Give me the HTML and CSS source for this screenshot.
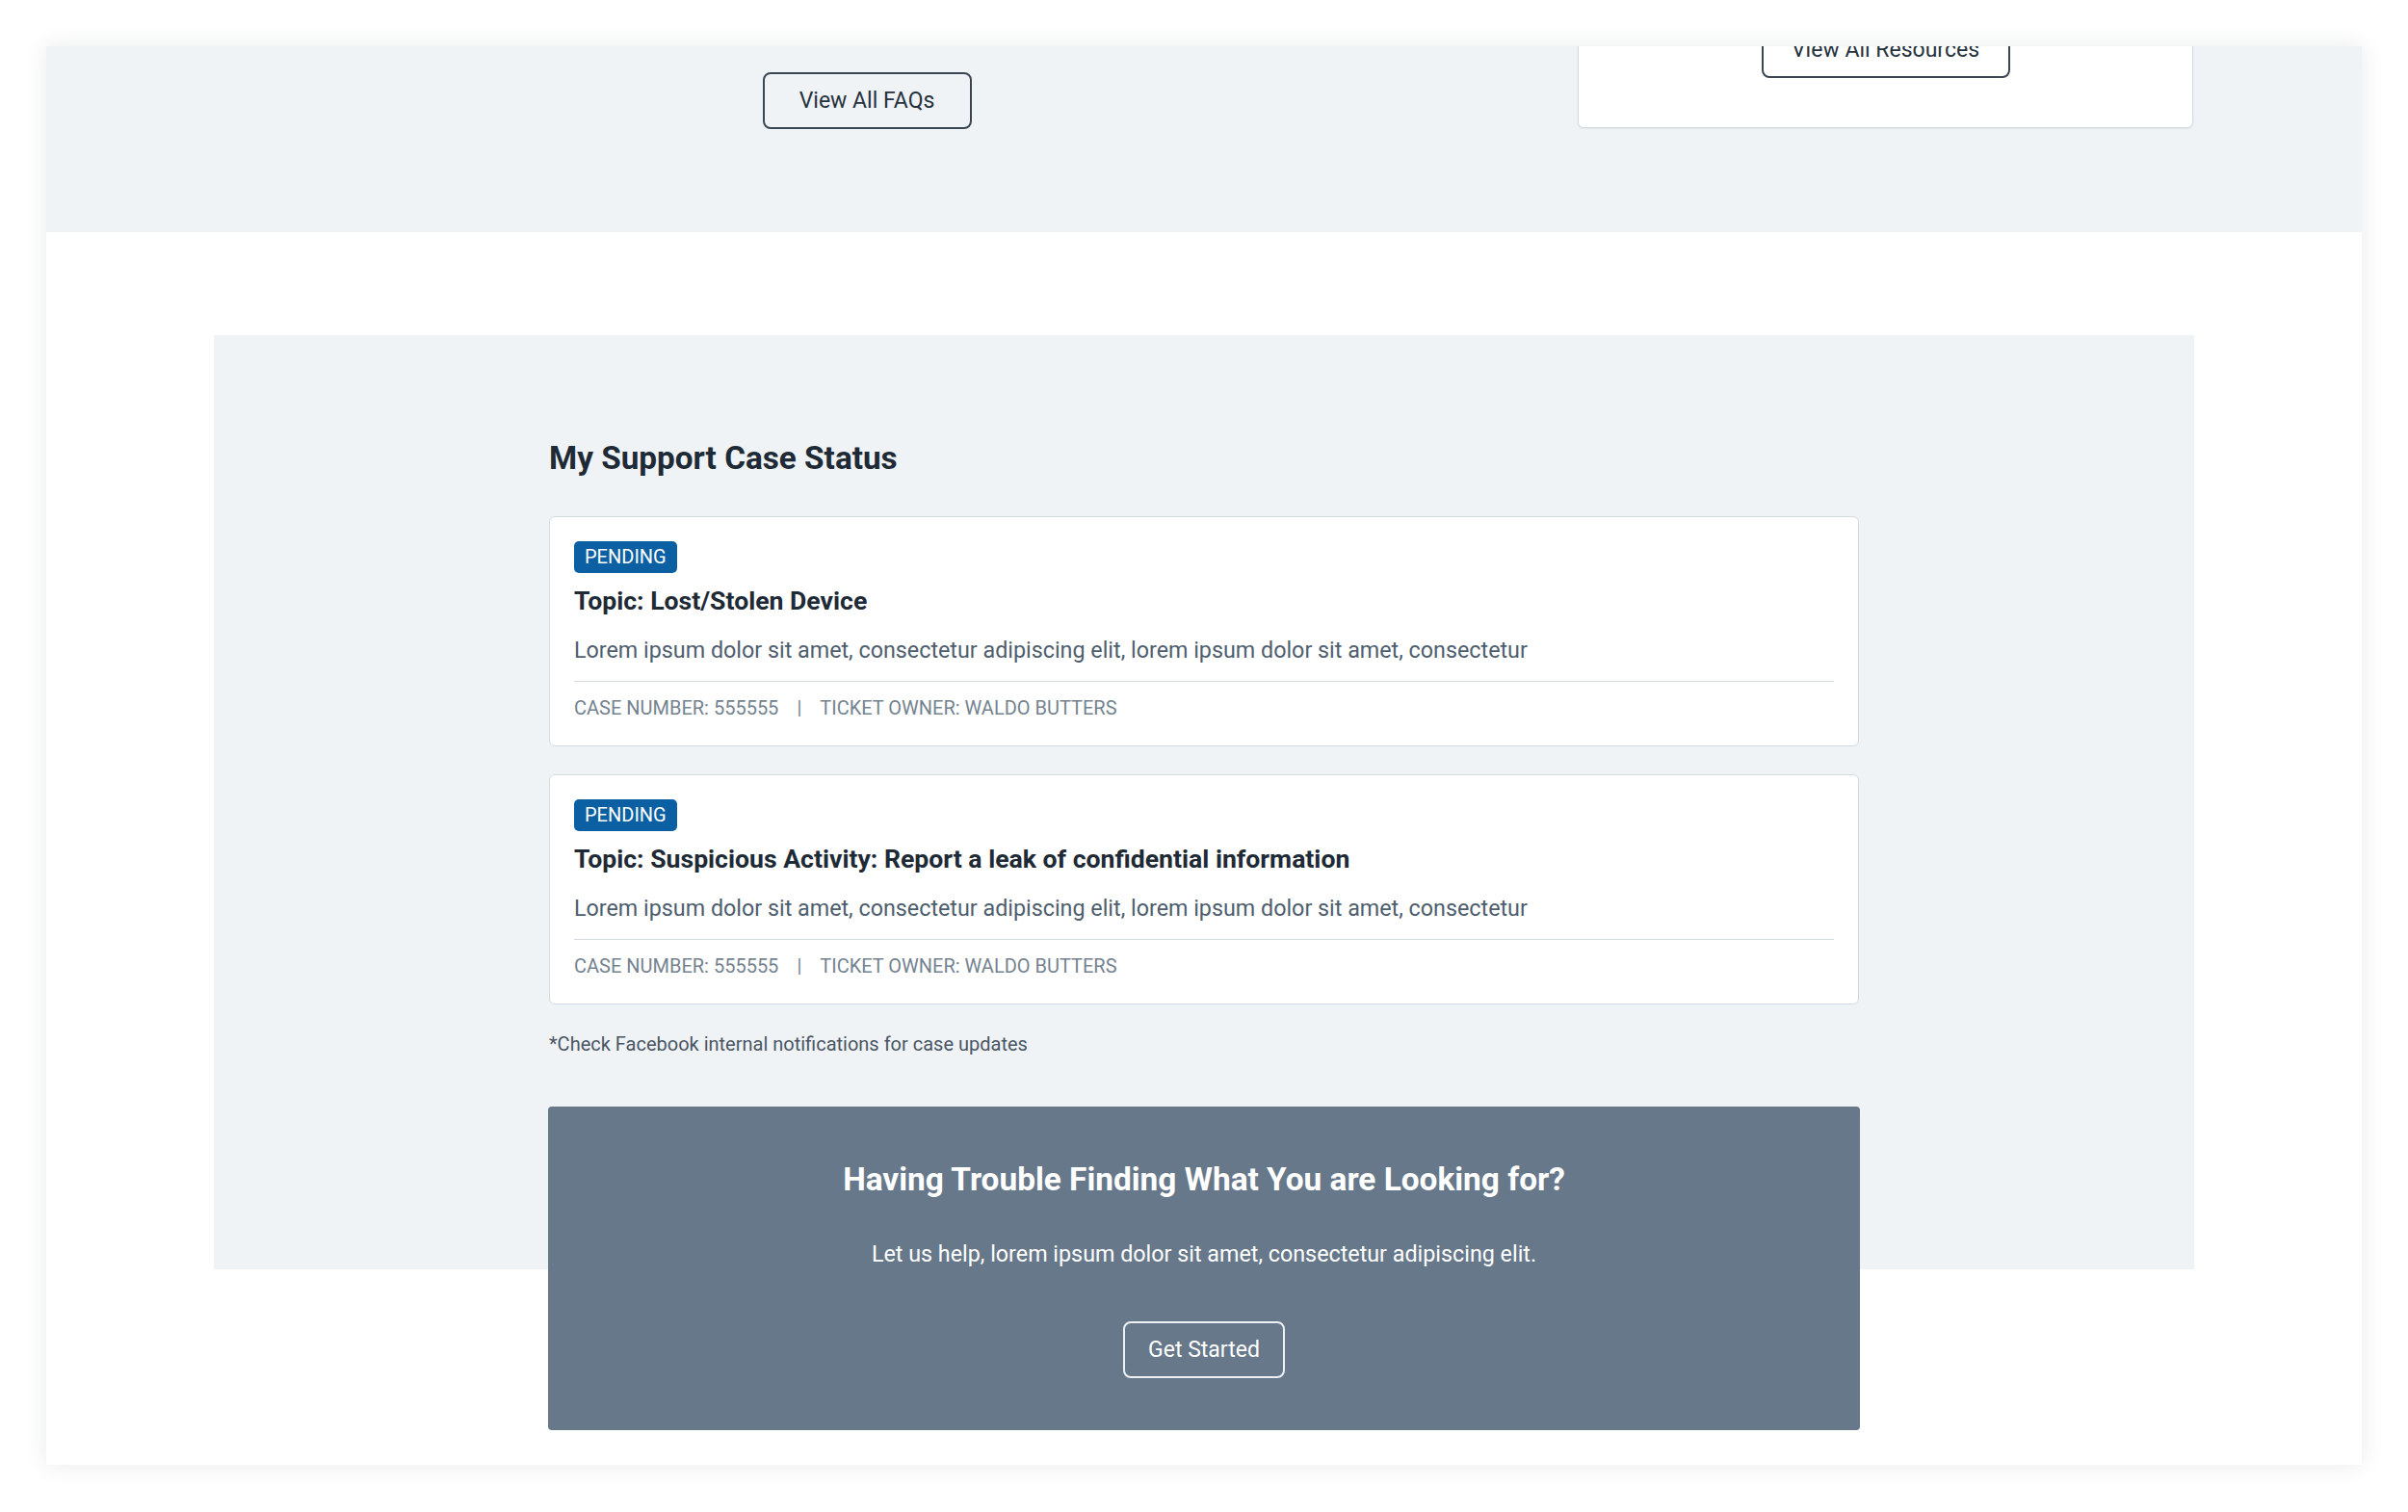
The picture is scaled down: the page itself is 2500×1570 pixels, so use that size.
FILE: index.html
```html
<!DOCTYPE html>
<html lang="en">
<head>
<meta charset="utf-8">
<title>Support</title>
<link rel="stylesheet" href="styles.css">
</head>
<body>
<div class="frame">
  <div class="viewport">
    <section class="top">
      <div class="top-inner">
        <div class="faq-col">
          <a class="btn btn-dark btn-faq" href="#">View All FAQs</a>
        </div>
        <div class="res-card">
          <a class="btn btn-dark btn-res" href="#">View All Resources</a>
        </div>
      </div>
    </section>

    <section class="main">
      <div class="status">
        <div class="status-col">
          <h2 class="status-title">My Support Case Status</h2>

          <article class="case">
            <span class="badge">PENDING</span>
            <h3 class="case-topic">Topic: Lost/Stolen Device</h3>
            <p class="case-desc">Lorem ipsum dolor sit amet, consectetur adipiscing elit, lorem ipsum dolor sit amet, consectetur</p>
            <div class="case-meta">
              <span>CASE NUMBER: 555555</span>
              <span class="sep">|</span>
              <span>TICKET OWNER: WALDO BUTTERS</span>
            </div>
          </article>

          <article class="case">
            <span class="badge">PENDING</span>
            <h3 class="case-topic">Topic: Suspicious Activity: Report a leak of confidential information</h3>
            <p class="case-desc">Lorem ipsum dolor sit amet, consectetur adipiscing elit, lorem ipsum dolor sit amet, consectetur</p>
            <div class="case-meta">
              <span>CASE NUMBER: 555555</span>
              <span class="sep">|</span>
              <span>TICKET OWNER: WALDO BUTTERS</span>
            </div>
          </article>

          <p class="note">*Check Facebook internal notifications for case updates</p>
        </div>
      </div>

      <div class="help">
        <h2 class="help-title">Having Trouble Finding What You are Looking for?</h2>
        <p class="help-text">Let us help, lorem ipsum dolor sit amet, consectetur adipiscing elit.</p>
        <a class="btn btn-light" href="#">Get Started</a>
      </div>
    </section>
  </div>
</div>
</body>
</html>
```

FILE: styles.css
```css
* {
  box-sizing: border-box;
}

html, body {
  margin: 0;
  padding: 0;
  background: #ffffff;
}

body {
  font-family: Roboto, "Liberation Sans", Arial, sans-serif;
  color: #1e2a35;
  padding: 48px 48px 49px;
}

.frame {
  width: 2404px;
  height: 1473px;
  background: #ffffff;
  box-shadow: 0 0 22px rgba(40, 50, 60, 0.10);
}

.viewport {
  height: 100%;
  overflow: hidden;
}

/* top (scrolled) section */
.top {
  margin-top: -60px;
  height: 253px;
  background: #eff3f6;
}

.top-inner {
  width: 2056px;
  margin: 0 auto;
  display: flex;
  gap: 60px;
}

.faq-col {
  width: 1356px;
  display: flex;
  justify-content: center;
  padding-top: 87px;
}

.res-card {
  width: 639px;
  height: 145px;
  background: #ffffff;
  border: 1px solid #d3dae1;
  border-radius: 6px;
  box-shadow: 0 1px 2px rgba(0, 0, 0, 0.06);
  display: flex;
  justify-content: center;
  padding-top: 33px;
}

.btn {
  display: inline-flex;
  align-items: center;
  justify-content: center;
  height: 59px;
  border-radius: 8px;
  font-size: 23px;
  text-decoration: none;
  line-height: 1;
}

.btn-dark {
  border: 2px solid #3a4753;
  color: #26323d;
  background: transparent;
}

.btn-faq {
  width: 217px;
}

.btn-res {
  width: 258px;
}

.btn-light {
  width: 168px;
  border: 2px solid #eef1f4;
  color: #ffffff;
}

/* main */
.main {
  padding-top: 107px;
  padding-bottom: 36px;
}

.status {
  width: 2056px;
  margin: 0 auto;
  background: #eff3f6;
  padding-top: 108px;
  padding-bottom: 222px;
}

.status-col {
  width: 1360px;
  margin: 0 auto;
}

.status-title {
  margin: 0 0 40px;
  font-size: 33.3px;
  line-height: 40px;
  font-weight: 700;
  color: #1e2a35;
}

.case {
  background: #ffffff;
  border: 1px solid #d3dae1;
  border-radius: 6px;
  padding: 25px;
  margin-bottom: 29px;
}

.badge {
  display: inline-block;
  background: #0a60a3;
  color: #ffffff;
  font-size: 20px;
  line-height: 25px;
  padding: 4px 11px;
  border-radius: 5px;
}

.case-topic {
  margin: 12px 0 0;
  font-size: 26.6px;
  line-height: 34px;
  font-weight: 700;
  color: #1e2a35;
}

.case-desc {
  margin: 18px 0 0;
  font-size: 23.3px;
  line-height: 32px;
  color: #4e5e6e;
  padding-bottom: 16px;
  border-bottom: 1px solid #d5dbe1;
}

.case-meta {
  margin-top: 13px;
  font-size: 20px;
  line-height: 28px;
  color: #74838f;
  display: flex;
}

.case-meta .sep {
  margin: 0 19px;
}

.note {
  margin: 0;
  font-size: 20px;
  line-height: 24px;
  color: #4a5663;
}

/* help banner */
.help {
  width: 1362px;
  margin: -169px auto 0;
  background: #67788a;
  border-radius: 4px;
  padding: 56px 0 54px;
  text-align: center;
  color: #ffffff;
}

.help-title {
  margin: 0;
  font-size: 33.4px;
  line-height: 40px;
  font-weight: 700;
}

.help-text {
  margin: 41px 0 0;
  font-size: 23.3px;
  line-height: 32px;
}

.help .btn-light {
  margin-top: 54px;
}
```
